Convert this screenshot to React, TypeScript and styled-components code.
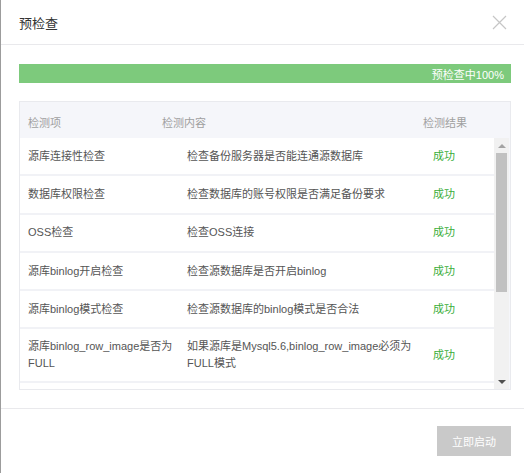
import React from 'react';
import styled, { createGlobalStyle } from 'styled-components';

interface CheckItem {
  id: number;
  name: string;
  content: string;
  result: string;
}

const checks: CheckItem[] = [
  { id: 1, name: '源库连接性检查', content: '检查备份服务器是否能连通源数据库', result: '成功' },
  { id: 2, name: '数据库权限检查', content: '检查数据库的账号权限是否满足备份要求', result: '成功' },
  { id: 3, name: 'OSS检查', content: '检查OSS连接', result: '成功' },
  { id: 4, name: '源库binlog开启检查', content: '检查源数据库是否开启binlog', result: '成功' },
  { id: 5, name: '源库binlog模式检查', content: '检查源数据库的binlog模式是否合法', result: '成功' },
  {
    id: 6,
    name: '源库binlog_row_image是否为FULL',
    content: '如果源库是Mysql5.6,binlog_row_image必须为FULL模式',
    result: '成功',
  },
];

const GlobalStyle = createGlobalStyle`
  html, body {
    margin: 0;
    padding: 0;
    background: #fff;
  }
  body {
    font-family: "Liberation Sans", "Noto Sans CJK SC", sans-serif;
    -webkit-font-smoothing: antialiased;
  }
`;

const Dialog = styled.div`
  width: 524px;
  height: 473px;
  box-sizing: border-box;
  border-left: 1px solid #9c9c9c;
  background: #fff;
  display: flex;
  flex-direction: column;
`;

const Header = styled.div`
  height: 44px;
  border-bottom: 1px solid #e9e9ec;
  padding: 0 17px 0 18px;
  display: flex;
  align-items: center;
  justify-content: space-between;
`;

const Title = styled.h3`
  margin: 0;
  font-size: 13px;
  font-weight: normal;
  color: #333;
`;

const CloseButton = styled.button`
  border: none;
  background: none;
  padding: 0;
  width: 15px;
  height: 15px;
  cursor: pointer;
  display: flex;
  svg {
    display: block;
  }
`;

const Content = styled.div`
  padding: 19px 13px 0 18px;
`;

const Progress = styled.div`
  height: 19px;
  background: #7dca7c;
  color: #fff;
  font-size: 11px;
  display: flex;
  align-items: center;
  justify-content: flex-end;
  padding: 0 7px;
`;

const Table = styled.div`
  margin-top: 18px;
  border: 1px solid #e9eaee;
  background: #f5f6fa;
`;

const HeadRow = styled.div`
  display: grid;
  grid-template-columns: 134px 261px 1fr;
  height: 36px;
  box-sizing: border-box;
  padding-top: 15px;
  font-size: 11px;
  line-height: 13px;
  color: #a0a0a0;
`;

const HeadCell = styled.div`
  padding: 0 8px;
`;

const BodyWrap = styled.div`
  display: flex;
  height: 251px;
`;

const Rows = styled.div`
  width: 474px;
  overflow: hidden;
  background: #fff;
`;

const Row = styled.div`
  display: grid;
  grid-template-columns: 159px 246px 1fr;
  min-height: 38.3px;
  padding: 9px 0;
  box-sizing: border-box;
  align-items: center;
  border-bottom: 2px solid #f1f2f6;
  font-size: 11px;
  line-height: 17px;
  color: #555;
`;

const Cell = styled.div<{ $success?: boolean }>`
  padding: 0 3px 0 8px;
  overflow-wrap: anywhere;
  color: ${(p) => (p.$success ? '#3aae3a' : 'inherit')};
`;

const ScrollTrack = styled.div`
  width: 15px;
  background: #f1f1f1;
  display: flex;
  flex-direction: column;
`;

const ScrollArrow = styled.div<{ $down?: boolean }>`
  height: 15px;
  display: flex;
  align-items: center;
  justify-content: center;
  &::before {
    content: '';
    width: 0;
    height: 0;
    border-left: 4px solid transparent;
    border-right: 4px solid transparent;
    ${(p) =>
      p.$down
        ? 'border-top: 4px solid #505050;'
        : 'border-bottom: 4px solid #a3a3a3;'}
  }
`;

const ScrollThumb = styled.div`
  height: 139px;
  margin: 0 2px;
  background: #c1c1c1;
`;

const ScrollSpace = styled.div`
  flex: 1;
`;

const Footer = styled.div`
  margin-top: 18px;
  border-top: 1px solid #e9e9ec;
  padding: 17px 13px 0 0;
  display: flex;
  justify-content: flex-end;
`;

const StartButton = styled.button`
  width: 74px;
  height: 30px;
  border: none;
  background: #c9c9c9;
  color: #fff;
  font-family: inherit;
  font-size: 11px;
  cursor: not-allowed;
`;

const App = () => {
  return (
    <>
      <GlobalStyle />
      <Dialog>
        <Header>
          <Title>预检查</Title>
          <CloseButton aria-label='close'>
            <svg width='15' height='15' viewBox='0 0 15 15'>
              <path d='M1 1 L14 14 M14 1 L1 14' stroke='#c6c6c6' strokeWidth='1.2' />
            </svg>
          </CloseButton>
        </Header>
        <Content>
          <Progress>预检查中100%</Progress>
          <Table>
            <HeadRow>
              <HeadCell>检测项</HeadCell>
              <HeadCell>检测内容</HeadCell>
              <HeadCell>检测结果</HeadCell>
            </HeadRow>
            <BodyWrap>
              <Rows>
                {checks.map((item) => (
                  <Row key={item.id}>
                    <Cell>{item.name}</Cell>
                    <Cell>{item.content}</Cell>
                    <Cell $success>{item.result}</Cell>
                  </Row>
                ))}
              </Rows>
              <ScrollTrack>
                <ScrollArrow />
                <ScrollThumb />
                <ScrollSpace />
                <ScrollArrow $down />
              </ScrollTrack>
            </BodyWrap>
          </Table>
        </Content>
        <Footer>
          <StartButton>立即启动</StartButton>
        </Footer>
      </Dialog>
    </>
  );
};

export default App;
